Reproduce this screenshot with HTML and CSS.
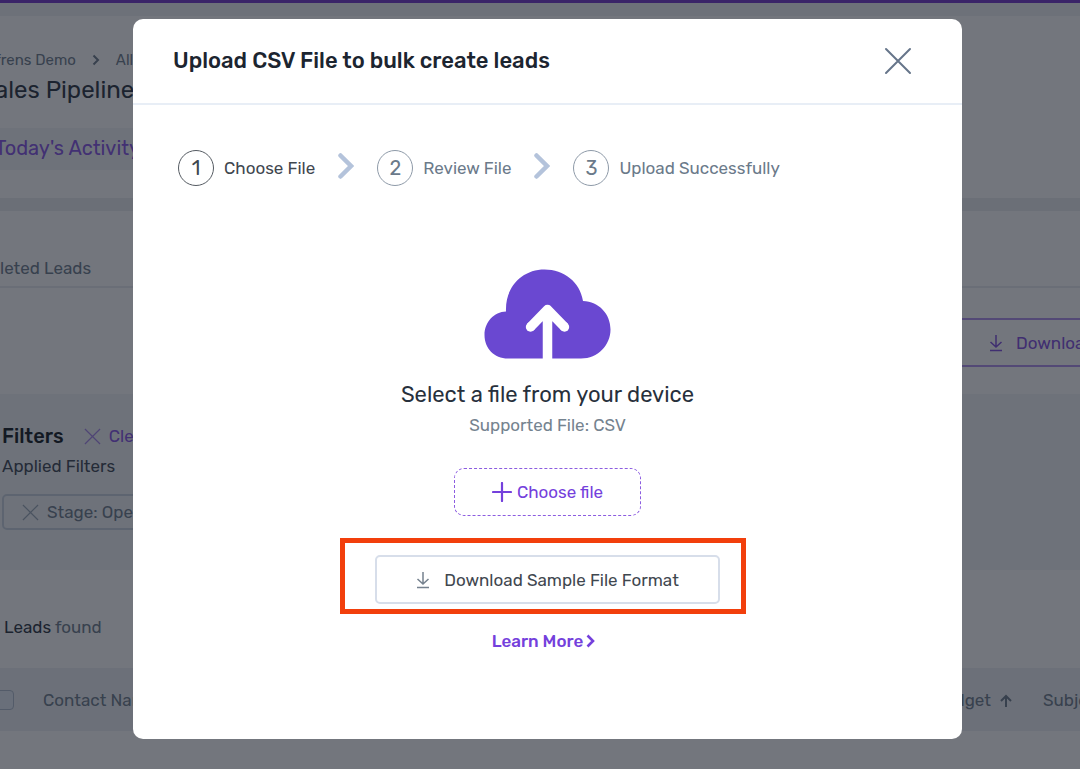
FILE: index.html
```html
<!DOCTYPE html>
<html lang="en">
<head>
    <meta charset="UTF-8">
    <meta name="viewport" content="width=device-width, initial-scale=1.0">
    <title>Upload CSV File</title>
    <link rel="stylesheet" href="styles.css">
</head>
<body>
    <div class="page">
        <header class="top">
            <nav class="crumbs">
                <a href="#">frens Demo</a>
                <svg width="8" height="12" viewBox="0 0 8 12"><path d="M1.500 1.500 6 6 1.500 10.500" fill="none" stroke="currentColor" stroke-width="2"/></svg>
                <a href="#">All</a>
            </nav>
            <h1>ales Pipeline</h1>
            <div class="activity"><a href="#">Today's Activity</a></div>
        </header>

        <div class="tabs"><a href="#">leted Leads</a></div>

        <div class="actions">
            <button type="button" class="export">
                <svg width="14" height="18" viewBox="0 0 14 18"><path d="M7 1v12M1.500 8 7 13l5.500-5M1 16.500h12" fill="none" stroke="currentColor" stroke-width="1.500"/></svg>
                Download
            </button>
        </div>

        <section class="filters">
            <div class="filters-head">
                <h2>Filters</h2>
                <button type="button" class="clear">
                    <svg width="17" height="17" viewBox="0 0 18 18"><path d="M1 1l16 16M17 1 1 17" stroke="#a585ea" stroke-width="1.300"/></svg>
                    Clear
                </button>
            </div>
            <p>Applied Filters</p>
            <button type="button" class="chip">
                <svg width="17" height="17" viewBox="0 0 18 18"><path d="M1 1l16 16M17 1 1 17" stroke="#9aa8b6" stroke-width="1.300"/></svg>
                Stage: Open
            </button>
        </section>

        <p class="count"><b>Leads</b> found</p>

        <table class="leads">
            <thead>
                <tr>
                    <th class="col-check"><input type="checkbox" aria-label="Select all"></th>
                    <th>Contact Name</th>
                    <th class="col-budget">Budget
                        <svg width="14" height="14" viewBox="0 0 14 14"><path d="M7 13V2M2 7l5-5 5 5" fill="none" stroke="currentColor" stroke-width="2"/></svg>
                    </th>
                    <th class="col-subject">Subject</th>
                </tr>
            </thead>
        </table>
    </div>

    <div class="overlay">
        <div class="modal" role="dialog" aria-labelledby="modal-title">
            <div class="modal-header">
                <h2 id="modal-title">Upload CSV File to bulk create leads</h2>
                <button type="button" class="close" aria-label="Close">
                    <svg width="28" height="28" viewBox="0 0 28 28"><path d="M2 2l24 24M26 2 2 26" stroke="currentColor" stroke-width="2" stroke-linecap="round"/></svg>
                </button>
            </div>

            <ol class="steps">
                <li class="step active"><span class="num">1</span>Choose File</li>
                <li class="arrow"><svg width="16" height="26" viewBox="0 0 16 26"><path d="M2.500 2.500 13 13 2.500 23.500" fill="none" stroke="currentColor" stroke-width="4.500" stroke-linecap="round"/></svg></li>
                <li class="step"><span class="num">2</span>Review File</li>
                <li class="arrow"><svg width="16" height="26" viewBox="0 0 16 26"><path d="M2.500 2.500 13 13 2.500 23.500" fill="none" stroke="currentColor" stroke-width="4.500" stroke-linecap="round"/></svg></li>
                <li class="step"><span class="num">3</span>Upload Successfully</li>
            </ol>

            <div class="upload">
                <svg class="cloud" width="127" height="90" viewBox="0 0 127 90">
                    <path d="M24 89.500C10 89.500 .5 79 .5 66S10 43 22 42.500C21 18 38 .5 60.500 .5 80 .5 96 13 99 32c16 .5 27.500 13 27.500 28.500S114 89.500 97 89.500Z" fill="#6a48d1"/>
                    <path d="M63.500 90V42M46.500 58l17-17.500L80.500 58" fill="none" stroke="#fff" stroke-width="9.500" stroke-linejoin="round"/>
                    <circle cx="46.500" cy="58" r="4.700" fill="#fff"/>
                    <circle cx="80.500" cy="58" r="4.700" fill="#fff"/>
                </svg>
                <h3>Select a file from your device</h3>
                <p>Supported File: CSV</p>
                <button type="button" class="choose">
                    <svg width="20" height="20" viewBox="0 0 20 20"><path d="M10 1v18M1 10h18" stroke="currentColor" stroke-width="2.200" stroke-linecap="round"/></svg>
                    Choose file
                </button>
                <div class="sample">
                    <button type="button" class="download">
                        <svg width="14" height="18" viewBox="0 0 14 18"><path d="M7 1v12M1.500 8 7 13l5.500-5M1 16.500h12" fill="none" stroke="#75818e" stroke-width="1.500"/></svg>
                        Download Sample File Format
                    </button>
                    <div class="highlight"></div>
                </div>
                <a href="#" class="learn">Learn More
                    <svg width="9" height="14" viewBox="0 0 9 14"><path d="M1.500 1.500 7 7l-5.500 5.500" fill="none" stroke="currentColor" stroke-width="2.600"/></svg>
                </a>
            </div>
        </div>
    </div>
</body>
</html>
```

FILE: styles.css
```css
* {
    box-sizing: border-box;
}

body {
    margin: 0;
    font-family: Rubik, Roboto, sans-serif;
    font-size: 17px;
    line-height: 24px;
    color: #6b7a8a;
    background: #fff;
}

h1, h2, h3, p, ol {
    margin: 0;
    padding: 0;
}

a {
    color: inherit;
    text-decoration: none;
}

button {
    font: inherit;
    color: inherit;
    background: none;
    border: none;
    padding: 0;
    cursor: pointer;
    display: flex;
    align-items: center;
    white-space: nowrap;
}

svg {
    flex: none;
}

.page {
    height: 100vh;
    overflow: hidden;
    border-top: 3px solid #7132ca;
}

.top {
    height: 208px;
    margin-left: -5px;
    border-top: 13px solid #f0f3f5;
    border-bottom: 13px solid #ebeef1;
}

.crumbs {
    display: flex;
    align-items: center;
    gap: 16px;
    padding-top: 32px;
    font-size: 15px;
}

h1 {
    font-size: 24px;
    font-weight: 400;
    line-height: 36px;
    color: #27303c;
}

.activity {
    width: 300px;
    height: 42px;
    margin-top: 20px;
    padding-top: 8px;
    background: #f3f5f7;
    font-size: 20px;
    color: #8450e6;
}

.tabs {
    height: 77px;
    padding-top: 45px;
    border-bottom: 2px solid #e8ebef;
}

.actions {
    display: flex;
    justify-content: flex-end;
    height: 106px;
    padding-top: 30px;
}

.export {
    width: 160px;
    height: 49px;
    margin-right: -20px;
    padding-left: 47px;
    gap: 13px;
    border: 2px solid #b08fee;
    color: #7f4ce0;
}

.filters {
    height: 176px;
    padding: 28px 2px;
    background: #f3f5f8;
    color: #3a4450;
}

.filters-head {
    display: flex;
    align-items: center;
    gap: 20px;
    height: 28px;
}

.filters h2 {
    font-size: 20px;
    font-weight: 500;
    color: #101820;
}

.clear {
    gap: 8px;
    color: #8450e6;
}

.filters p {
    margin-top: 4px;
}

.chip {
    width: 170px;
    height: 36px;
    margin-top: 16px;
    padding-left: 18px;
    gap: 8px;
    border: 2px solid #c9d3de;
    border-radius: 5px;
    color: #6b7a8a;
}

.count {
    height: 98px;
    padding: 45px 4px;
}

.count b {
    font-weight: 400;
    color: #27303c;
}

.leads {
    width: 100%;
    table-layout: fixed;
    border-collapse: collapse;
    background: #eef1f4;
}

.leads th {
    height: 63px;
    padding: 0;
    font-weight: 400;
    text-align: left;
    white-space: nowrap;
}

.leads .col-check {
    width: 43px;
}

.leads .col-budget {
    width: 148px;
    padding-left: 38px;
}

.leads .col-subject {
    width: 37px;
}

.leads svg {
    margin-left: 4px;
    vertical-align: -2px;
}

.leads input {
    appearance: none;
    display: block;
    width: 20px;
    height: 20px;
    margin: 0 0 0 -6px;
    border: 1px solid #aebccc;
    border-radius: 4px;
    background: #e6edf8;
}

.overlay {
    position: fixed;
    inset: 0;
    display: flex;
    align-items: flex-start;
    padding: 19px 118px 0 133px;
    background: rgba(21, 27, 38, 0.6);
}

.modal {
    flex: 1;
    background: #fff;
    border-radius: 10px;
}

.modal-header {
    display: flex;
    align-items: center;
    justify-content: space-between;
    height: 86px;
    padding: 0 50px 0 40px;
    border-bottom: 2px solid #e8eef6;
}

.modal-header h2 {
    font-size: 22px;
    font-weight: 500;
    color: #1c2530;
}

.close {
    color: #66758a;
}

.steps {
    display: flex;
    align-items: center;
    gap: 23px;
    padding: 45px 45px 0;
    list-style: none;
}

.step {
    display: flex;
    align-items: center;
    gap: 10px;
    white-space: nowrap;
}

.step.active {
    color: #3f474f;
}

.num {
    display: flex;
    align-items: center;
    justify-content: center;
    width: 36px;
    height: 36px;
    border: 1px solid #8e9aa8;
    border-radius: 50%;
    font-size: 20px;
}

.active .num {
    border-color: #555b62;
}

.arrow {
    display: flex;
    padding-bottom: 4px;
    color: #b4c3db;
}

.upload {
    display: flex;
    flex-direction: column;
    align-items: center;
    padding: 83px 0 86px;
}

.upload h3 {
    margin-top: 20px;
    font-size: 22px;
    font-weight: 400;
    line-height: 32px;
    color: #27303c;
}

.upload p {
    margin-top: 2px;
    color: #75838f;
}

.choose {
    justify-content: center;
    gap: 5px;
    width: 187px;
    height: 48px;
    margin-top: 31px;
    border: 1px dashed #8c5ce0;
    border-radius: 10px;
    color: #7440dc;
}

.sample {
    position: relative;
    margin-top: 39px;
}

.download {
    justify-content: center;
    gap: 14px;
    width: 345px;
    height: 49px;
    border: 2px solid #d7deea;
    border-radius: 5px;
    color: #3f474f;
}

.highlight {
    position: absolute;
    inset: -17px -26px -10px -35px;
    border: 5px solid #f23f0c;
    pointer-events: none;
}

.learn {
    display: flex;
    align-items: center;
    gap: 3px;
    margin-top: 25px;
    padding-right: 8px;
    font-weight: 500;
    color: #7440dc;
}
```
